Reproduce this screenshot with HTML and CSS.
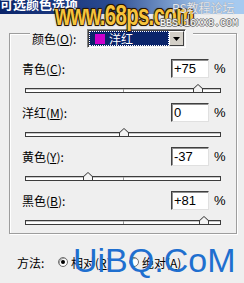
FILE: index.html
```html
<!DOCTYPE html>
<html lang="zh-CN">
<head>
  <meta charset="UTF-8">
  <title>可选颜色选项</title>
  <link rel="stylesheet" href="styles.css">
</head>
<body>
  <div class="titlebar"><span class="title-text">可选颜色选项</span></div>

  <div class="group">
    <div class="head">
      <span class="head-label">颜色(<u>O</u>):</span>
      <div class="select">
        <div class="select-field"><span class="swatch"></span>洋红</div>
        <div class="select-btn">
          <svg width="7" height="4" viewBox="0 0 7 4"><polygon points="0,0 7,0 3.5,4" fill="#000"/></svg>
        </div>
      </div>
    </div>

    <div class="channels">
      <div class="channel">
        <div class="row">
          <span class="label">青色(<u>C</u>):</span>
          <span class="input">+75</span>
          <span class="pct">%</span>
        </div>
        <div class="slider"><span class="tick"></span><span class="thumb" style="left:167px"></span></div>
      </div>
      <div class="channel">
        <div class="row">
          <span class="label">洋红(<u>M</u>):</span>
          <span class="input">0</span>
          <span class="pct">%</span>
        </div>
        <div class="slider"><span class="tick"></span><span class="thumb" style="left:93px"></span></div>
      </div>
      <div class="channel">
        <div class="row">
          <span class="label">黄色(<u>Y</u>):</span>
          <span class="input">-37</span>
          <span class="pct">%</span>
        </div>
        <div class="slider"><span class="tick"></span><span class="thumb" style="left:57px"></span></div>
      </div>
      <div class="channel">
        <div class="row">
          <span class="label">黑色(<u>B</u>):</span>
          <span class="input">+81</span>
          <span class="pct">%</span>
        </div>
        <div class="slider"><span class="tick"></span><span class="thumb" style="left:173px"></span></div>
      </div>
    </div>
  </div>

  <div class="method">
    <span class="method-label">方法:</span>
    <span class="radio checked"></span><span class="radio-text">相对(<u>R</u>)</span>
    <span class="radio"></span><span class="radio-text">绝对(<u>A</u>)</span>
  </div>

  <!-- 水印 -->
  <div class="mark68">www.68ps.com</div>
  <div class="bbs">
    <div class="bbs-name">PS教程论坛</div>
    <div class="bbs-url">BBS.16XX8.COM</div>
  </div>
  <div class="uibq">UiBQ.CoM</div>
</body>
</html>
```

FILE: styles.css
```css
*{margin:0;padding:0;box-sizing:border-box;}
body{width:244px;height:283px;overflow:hidden;background:#efefef;font-family:"Noto Sans CJK SC","Liberation Sans",sans-serif;font-size:12px;color:#000;position:relative;}
u{text-decoration:underline;}

/* 타이틀바 */
.titlebar{height:14px;overflow:hidden;background:linear-gradient(90deg,#0a246a 0%,#2a4a90 45%,#a6caf0 85%);}
.title-text{display:block;margin-top:-4px;line-height:16px;font-size:13px;font-weight:bold;color:#fff;}

.group{margin:19px 0 0 9px;width:228px;border:1px solid #9d9d9d;box-shadow:inset 1px 1px 0 #fff,1px 1px 0 #fff;padding:0 0 8px 0;}
.head{display:flex;align-items:center;width:max-content;margin:-5px 0 0 20px;padding:0 7px 0 2px;background:#efefef;}
.head-label{width:55px;line-height:19px;}
.select{display:flex;width:99px;height:19px;border:1px solid;border-color:#808080 #fff #fff #808080;box-shadow:inset 1px 1px 0 #404040;padding:1px 1px 1px 1px;}
.select-field{flex:1;display:flex;align-items:center;gap:4px;background:#0a246a;outline:1px dotted #fff;outline-offset:-1px;color:#fff;padding-left:6px;line-height:15px;}
.swatch{width:10px;height:10px;background:#cc00cc;}
.select-btn{width:15px;display:flex;align-items:center;justify-content:center;background:#d4d0c8;border:1px solid;border-color:#fff #404040 #404040 #fff;}

.channels{margin-top:11px;}
.channel{margin-bottom:10px;}
.channel:last-child{margin-bottom:0;}
.row{display:flex;align-items:center;height:19px;padding-left:12px;}
.label{flex:1;}
.input{width:38px;height:19px;background:#fff;border:1px solid;border-color:#404040 #e0e0e0 #e0e0e0 #404040;box-shadow:inset 1px 1px 0 #909090;padding-left:2px;line-height:17px;font-family:"Liberation Sans",sans-serif;font-size:13px;}
.pct{width:27px;padding-left:5px;font-family:"Liberation Sans",sans-serif;font-size:13px;}
.slider{position:relative;margin:10px 0 0 15px;width:196px;height:5px;border:1px solid #3c3c3c;background:#fff;box-shadow:inset 0 1px 0 #c8c8c8;}
.tick{position:absolute;left:97px;top:0;width:1px;height:3px;background:#9a9a9a;}
.thumb{position:absolute;top:-5px;width:10px;height:9px;background:#3c3c3c;clip-path:polygon(50% 0,100% 50%,100% 100%,0 100%,0 50%);}
.thumb::after{content:"";position:absolute;left:1px;top:1px;width:8px;height:7px;background:#f4f4f4;clip-path:polygon(50% 0,100% 55%,100% 100%,0 100%,0 55%);}

.method{display:flex;align-items:center;height:16px;margin-top:20px;padding-left:17px;}
.method-label{width:41px;}
.radio{width:10px;height:10px;border-radius:50%;border:1px solid #707070;background:#fff;box-shadow:inset 1px 1px 0 #a0a0a0;display:flex;align-items:center;justify-content:center;margin-right:3px;}
.radio.checked::after{content:"";width:4px;height:4px;border-radius:50%;background:#000;}
.radio-text{width:58px;}

/* 워터마크 */
.mark68{position:absolute;left:55px;top:0;font-family:"Liberation Sans",sans-serif;font-size:30px;line-height:30px;font-weight:bold;letter-spacing:-1px;color:#f6c43c;transform:scaleX(0.68);transform-origin:0 0;white-space:nowrap;text-shadow:1px 1px 0 #2a1600,-1px -1px 0 #2a1600,1px -1px 0 #2a1600,-1px 1px 0 #2a1600,0 1px 0 #2a1600,0 -1px 0 #2a1600,0 0 3px #000;}
.bbs{position:absolute;left:160px;top:1px;}
.bbs-name{padding-left:12px;font-size:12px;line-height:14px;color:#e4e6ee;text-shadow:0 0 1px #777;}
.bbs-url{font-family:"Liberation Mono",monospace;font-size:10px;line-height:12px;margin-top:3px;color:#fff;text-shadow:1px 0 0 #777,-1px 0 0 #777,0 1px 0 #777,0 -1px 0 #777;}
.uibq{position:absolute;left:73px;top:243px;font-family:"Liberation Sans",sans-serif;font-size:34px;line-height:34px;color:#1f6fcf;}
```
